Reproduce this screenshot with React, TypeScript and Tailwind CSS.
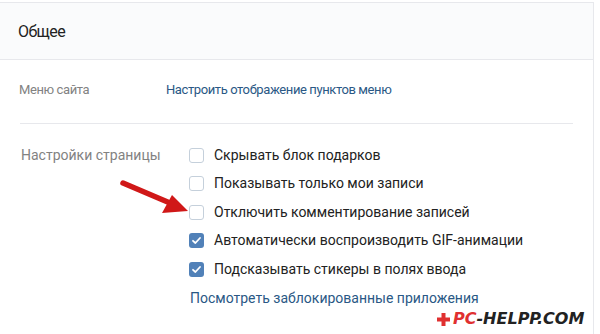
import React from "react";

const Box = ({ checked }: { checked?: boolean }) =>
  checked ? (
    <span className="w-[15px] h-[15px] rounded-[3px] bg-[#5181b8] flex items-center justify-center shrink-0">
      <svg width="11" height="11" viewBox="0 0 11 11">
        <path d="M2 5.8 L4.4 8 L9 3" stroke="#fff" strokeWidth="1.8" fill="none" strokeLinecap="round" strokeLinejoin="round" />
      </svg>
    </span>
  ) : (
    <span className="w-[15px] h-[15px] rounded-[3px] border border-[#c5d0db] bg-white shrink-0" />
  );

const rows: { t: string; c?: boolean }[] = [
  { t: "Скрывать блок подарков" },
  { t: "Показывать только мои записи" },
  { t: "Отключить комментирование записей" },
  { t: "Автоматически воспроизводить GIF-анимации", c: true },
  { t: "Подсказывать стикеры в полях ввода", c: true },
];

export default function App() {
  return (
    <div
      className="w-[600px] h-[334px] bg-white relative overflow-hidden"
      style={{ fontFamily: "Roboto, 'Open Sans', sans-serif" }}
    >
      <div className="mt-[2px] w-[594px] h-[340px] border-t border-r border-[#e7e8ec]">
        <div className="h-[57px] bg-[#fafbfc] border-b border-[#e7e8ec] pl-[18px] pt-px flex items-center text-[16px] tracking-[-0.6px] text-[#222]">
          Общее
        </div>
        <div className="flex pt-[22px] pb-[25px] text-[13px] leading-[16px] tracking-[-0.4px]">
          <div className="w-[166px] pl-[19px] text-[#828282]">Меню сайта</div>
          <div className="text-[#2a5885]">Настроить отображение пунктов меню</div>
        </div>
        <div className="mx-[20px] h-px bg-[#e7e8ec]" />
        <div className="flex pt-[17px] text-[14px]">
          <div className="w-[189px] pl-[21px] text-[#828282] h-[28.5px] flex items-center">
            Настройки страницы
          </div>
          <div className="flex flex-col">
            {rows.map((r) => (
              <div key={r.t} className="h-[28.5px] flex items-center gap-[10px] text-[#222]">
                <Box checked={r.c} />
                <span>{r.t}</span>
              </div>
            ))}
            <div className="h-[30px] flex items-center pl-px text-[#2a5885]">
              Посмотреть заблокированные приложения
            </div>
          </div>
        </div>
      </div>

      <svg className="absolute left-0 top-0" width="600" height="334" viewBox="0 0 600 334">
        <line x1="123" y1="183" x2="170" y2="203" stroke="#d01818" strokeWidth="5.5" strokeLinecap="round" />
        <polygon points="188,211 162,213 172,195" fill="#d01818" />
      </svg>

      <div className="absolute left-[437px] top-[311px] flex items-center gap-[3px]">
        <svg width="13" height="13" viewBox="0 0 13 13">
          <path d="M4.5 0h4v4.5h4.5v4h-4.5v4.5h-4v-4.5h-4.5v-4h4.5z" fill="#e03030" />
        </svg>
        <span
          className="text-[16px] font-black italic leading-none"
          style={{ fontFamily: "'DejaVu Sans', sans-serif" }}
        >
          <span className="text-[#e03030]">PC</span>
          <span className="text-[#222]">-HELPP.COM</span>
        </span>
      </div>
    </div>
  );
}
